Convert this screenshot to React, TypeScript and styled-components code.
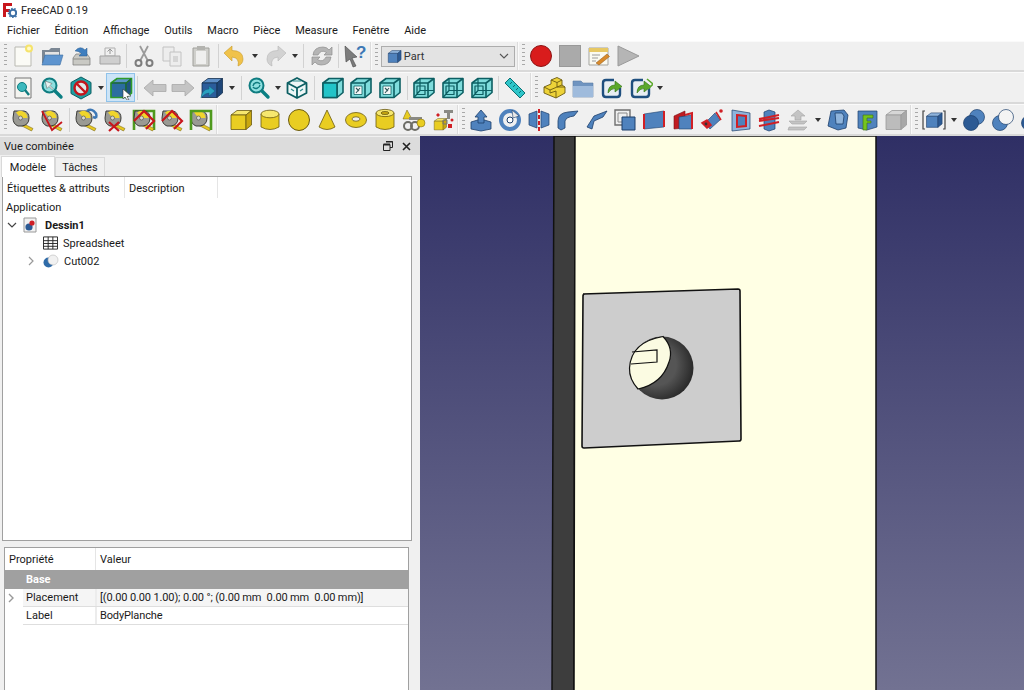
import React from 'react';
import styled, { createGlobalStyle } from 'styled-components';

const GlobalStyle = createGlobalStyle`
  html, body { margin: 0; padding: 0; background: #fff; }
  body { font-family: Roboto, "Open Sans", "Liberation Sans", sans-serif; color: #1a1a1a; }
`;

const cube = (t: string, l: string, r: string, s = '#23405f') => (
  <g stroke={s} strokeWidth=".8" strokeLinejoin="round">
    <path d="M2 7 8 2.5H22.5L17 7Z" fill={t} />
    <path d="M2 7H17V21.5H2Z" fill={l} />
    <path d="M17 7 22.5 2.5V17L17 21.5Z" fill={r} />
  </g>
);
const Y = ['#f6e76e', '#e9cd22', '#c9a80f', '#6b5a10'] as const;
const B = ['#8fb4dc', '#4f82bd', '#2c5a94', '#1d3f6b'] as const;
const yellowCube = cube(Y[0], Y[1], Y[2], Y[3]);
const blueCube = cube(B[0], B[1], B[2], B[3]);

const wire = (face?: string, mark?: boolean) => (
  <g stroke="#0d5f63" strokeWidth="1.6" strokeLinejoin="round" fill="none">
    <path d="M2 7 8 2.5H22V16.5L16 21.5H2Z" fill="#7fdcdc" />
    <path d="M2 7H16V21.5M16 7 22 2.5" />
    {face === 'front' && <path d="M2 7H16V21.5H2Z" fill="#22c4c8" />}
    {face === 'hollow' && <path d="M5 10H13V18.5H5Z" fill="#f4f8f8" strokeWidth=".8" />}
    {face === 'back' && <path d="M5 10H13V18.5H5ZM8 2.5V14.5H22M8 14.5 2 21.5" strokeWidth="1.2" />}
    {mark && <path d="M7 12 10 15M11 12 7 17" strokeWidth="1.1" stroke="#34585a" />}
  </g>
);

const isoCube = (
  <g stroke="#0d5f63" strokeWidth="1.8" strokeLinejoin="round" fill="#eef7f7">
    <path d="M12 2 21.5 7V17L12 22 2.5 17V7Z" />
    <path d="M2.5 7 12 12 21.5 7M12 12V22" fill="none" />
    <path d="M8 5H16M6 13 9 15M15 15 18 13" stroke="#2a8a8c" strokeWidth="1.2" fill="none" />
  </g>
);

const lens = (inner: React.ReactNode) => (
  <g>
    <path d="M14 14 21 21" stroke="#0b7f83" strokeWidth="3.4" strokeLinecap="round" />
    <circle cx="9.5" cy="9.5" r="7" fill="#8fe0e0" stroke="#0f7c80" strokeWidth="2" />
    {inner}
  </g>
);

const tape = (extra?: React.ReactNode) => (
  <g>
    <path d="M11 15 22 20.5 20.5 23 10 17.5Z" fill="#e8c821" stroke="#6b5a10" strokeWidth=".5" />
    <path d="M3 3H13Q18 4 18 10 18 17 11 18H7Q2 16 2 10Z" fill="#9a9a94" stroke="#3b3b38" strokeWidth="1" />
    <path d="M9.5 10H16.5A7 7 0 0 0 5 4.6Z" fill="#f0d52c" />
    <circle cx="9.5" cy="10" r="2" fill="#d9d9d2" stroke="#444" strokeWidth=".6" />
    {extra}
  </g>
);
const redAngle = <path d="M2 13 12 3 22 13 14 21" fill="none" stroke="#c8161c" strokeWidth="2.2" />;
const greenFrame = <path d="M2 22V3H22V22" fill="none" stroke="#4f9a1e" strokeWidth="2.6" />;

const arrowFlat = (fill: string, stroke: string, flip?: boolean) => (
  <path
    d="M1 12 10 4V8.5H23V15.5H10V20Z"
    fill={fill}
    stroke={stroke}
    strokeWidth=".8"
    transform={flip ? 'matrix(-1 0 0 1 24 0)' : undefined}
  />
);

const linkIcon = (double?: boolean) => (
  <g>
    <path d="M14 4H6Q3 4 3 7V18Q3 21 6 21H17Q20 21 20 18V12" fill="#e9eef3" stroke="#1f4f7f" strokeWidth="2.4" />
    <path d="M8 17Q8 9 15 9V5L22 10.5 15 16V12.5Q11 12.5 8 17Z" fill="#5ba82a" stroke="#2f6d16" strokeWidth=".6" />
    {double && <path d="M18 3 24 8 19 13" stroke="#5ba82a" strokeWidth="1.6" fill="none" />}
  </g>
);

const icons: Record<string, React.ReactNode> = {
  new: (
    <g>
      <path d="M4 3H20V22H4Z" fill="#fbfbf6" stroke="#b9b9b2" />
      <circle cx="18" cy="4.5" r="4" fill="#f5e36b" />
      <circle cx="18" cy="4.5" r="2" fill="#fff9c9" />
    </g>
  ),
  open: (
    <g>
      <path d="M2 6H9L11 4H20V19H2Z" fill="#7b8794" />
      <path d="M5 8H19V14H5Z" fill="#e4e4e4" />
      <path d="M5 11H23L20 21H2Z" fill="#5d94cf" stroke="#3e6ea3" strokeWidth=".6" />
    </g>
  ),
  save: (
    <g>
      <path d="M4 14 7 10H18L21 14V21H4Z" fill="#c9c9c4" stroke="#777" strokeWidth=".7" />
      <path d="M4 15H21" stroke="#8d8d88" />
      <path d="M6 7Q11 1 16 6L18 4V12H10L12.5 9.5Q9 6.5 6 7Z" fill="#3f7fbf" stroke="#285a8f" strokeWidth=".5" />
    </g>
  ),
  print: (
    <g opacity=".75">
      <path d="M7 4H17V12H7Z" fill="#f1f1f1" stroke="#9a9a9a" />
      <path d="M12 5V10M9.5 7.5 12 5 14.5 7.5" stroke="#777" fill="none" />
      <path d="M2 12H22V20H2Z" fill="#c4c4c4" stroke="#8a8a8a" />
    </g>
  ),
  cut: (
    <g fill="none" stroke="#9a9a9a">
      <path d="M8 2 16 17M16 2 8 17" strokeWidth="1.8" />
      <circle cx="6.5" cy="19" r="3" strokeWidth="2" stroke="#7d7d7d" />
      <circle cx="17.5" cy="19" r="3" strokeWidth="2" stroke="#7d7d7d" />
    </g>
  ),
  copy: (
    <g fill="#ededed" stroke="#c2c2c2">
      <path d="M3 3H14V17H3Z" />
      <path d="M10 8H21V22H10Z" />
      <path d="M13 12H18V18H13Z" fill="#d5d5d5" stroke="none" />
    </g>
  ),
  paste: (
    <g>
      <path d="M4 4H20V22H4Z" fill="#cfcfcb" stroke="#a0a09b" />
      <path d="M7 7H17V20H7Z" fill="#efefee" />
      <path d="M8 2H16V6H8Z" fill="#b3b3af" />
    </g>
  ),
  undo: (
    <path d="M1 9 9 2V6.5Q20 6.5 20 15 20 20 15 22 17 14 9 13V17Z" fill="#f0c24a" stroke="#c89a28" strokeWidth=".6" />
  ),
  redo: (
    <path d="M23 9 15 2V6.5Q4 6.5 4 15 4 20 9 22 7 14 15 13V17Z" fill="#d2d2d2" stroke="#b5b5b5" strokeWidth=".6" />
  ),
  refresh: (
    <g fill="#b5b5b5" stroke="#8e8e8e" strokeWidth=".7">
      <path d="M3 11Q4 3 13 3 17 3 19 6L22 3V11H14L16.5 8.5Q11 5 8 11Z" />
      <path d="M21 13Q20 21 11 21 7 21 5 18L2 21V13H10L7.5 15.5Q13 19 16 13Z" />
    </g>
  ),
  whats: (
    <g>
      <path d="M2 2 14 13 9 14 13 22 10 23 7 15 3 18Z" fill="#7c7c7c" stroke="#444" strokeWidth=".6" />
      <text x="13" y="14" fontSize="17" fontWeight="700" fill="#3d78b5" fontFamily="Liberation Sans, sans-serif">?</text>
    </g>
  ),
  record: <circle cx="12" cy="12" r="10.5" fill="#d91c1c" stroke="#8e1414" />,
  stop: <rect x="1.5" y="1.5" width="21" height="21" fill="#aaa" stroke="#999" />,
  macro: (
    <g>
      <path d="M2 4H21V21H2Z" fill="#fafaf2" stroke="#a5a5a0" />
      <path d="M2 4H21V8H2Z" fill="#e7c864" />
      <path d="M5 11H13M5 14H11M5 17H9" stroke="#9a9a9a" />
      <path d="M9 19 20 10 22.5 12.5 12 21Z" fill="#d98a2b" stroke="#8a561b" strokeWidth=".5" />
    </g>
  ),
  play: <path d="M2 2 23 12 2 22Z" fill="#b5b5b5" stroke="#9a9a9a" />,
  fitAll: (
    <g>
      <path d="M4 2H20V22H4Z" fill="#f4f4f0" stroke="#777" />
      <circle cx="11" cy="11" r="4.5" fill="#3cb9bd" stroke="#0f7c80" />
      <path d="M14 14 18 19" stroke="#0f7c80" strokeWidth="2.4" />
    </g>
  ),
  fitSel: lens(<path d="M5 5 12 7.5 10 9.5 13 12.5 12 13.5 9 10.5 7 12.5Z" fill="#e8f2f2" stroke="#555" strokeWidth=".5" />),
  draw: (
    <g>
      <path d="M12 1 22 6.5V17.5L12 23 2 17.5V6.5Z" fill="#1f9ea2" stroke="#0d5f63" />
      <circle cx="12" cy="12" r="6.5" fill="#dfe9e9" stroke="#c4161c" strokeWidth="2.4" />
      <path d="M7.5 7.5 16.5 16.5" stroke="#c4161c" strokeWidth="2.4" />
    </g>
  ),
  bbox: (
    <g>
      {cube('#5a97c9', '#2b6da0', '#1f5580', '#143f63')}
      <path d="M2 7 8 2.5H22.5V17L17 21.5H2Z" fill="none" stroke="#2f9a2a" strokeWidth="1.6" />
      <path d="M2 7H17V21.5M17 7 22.5 2.5" fill="none" stroke="#1f7a1f" strokeWidth="1.1" />
      <path d="M14 13 22 20 18 20.5 20 24 18 24 16 21 14 23Z" fill="#fff" stroke="#333" strokeWidth=".6" />
    </g>
  ),
  back: arrowFlat('#c4c4c4', '#a8a8a8'),
  forward: arrowFlat('#c4c4c4', '#a8a8a8', true),
  viewMenu: (
    <g>
      {cube('#5d8fc7', '#2b5d9b', '#1e4678', '#14304f')}
      <path d="M1 22Q2 13 9 13V10L15 15 9 20V17Q5 17 1 22Z" fill="#2aa0c0" stroke="#14607a" strokeWidth=".5" />
    </g>
  ),
  zoomSync: lens(<path d="M6 10A4 4 0 0 1 13 8M13 9A4 4 0 0 1 6 11" stroke="#0f7c80" strokeWidth="1.4" fill="none" />),
  iso: isoCube,
  front: wire('front'),
  top: wire('hollow', true),
  right: wire('hollow', true),
  backV: wire('back'),
  bottom: wire('back'),
  left: wire('back'),
  ruler: (
    <g>
      <path d="M2 7 7 2 22 17 17 22Z" fill="#2ec5c9" stroke="#0d6f73" />
      <path d="M7 8 9 6M10 11 12 9M13 14 15 12M16 17 18 15" stroke="#0d6f73" />
    </g>
  ),
  part: (
    <g fill="#edd238" stroke="#6b5a10" strokeWidth=".9" strokeLinejoin="round">
      <path d="M2 11 9 8V4L15 1.5 20 4V9L23 11V17L14 22 2 17Z" />
      <path d="M2 11 8 14V17L14 15V22M9 4 15 6.5 20 4M15 6.5V11L20 9M8 14 15 11 23 11" fill="none" />
    </g>
  ),
  folder: (
    <g>
      <path d="M2 5H10L12 7H22V21H2Z" fill="#6f94c0" stroke="#5c7da6" strokeWidth=".6" />
      <path d="M2 10H22V21H2Z" fill="#9fbbdc" />
    </g>
  ),
  link: linkIcon(),
  linkDouble: linkIcon(true),
  tape: tape(),
  tapeAngle: tape(<path d="M2 3 12 22 22 14" fill="none" stroke="#c8161c" strokeWidth="1.8" />),
  tapeRefresh: tape(<path d="M13 3A6 6 0 0 1 22 10M22 10 19 9" fill="none" stroke="#3d78b5" strokeWidth="2.4" />),
  tapeX: tape(<path d="M6 14 16 23M16 14 6 23" stroke="#c8161c" strokeWidth="2.2" />),
  tapeGreenRed: (
    <g>
      {greenFrame}
      {tape()}
      {redAngle}
    </g>
  ),
  tapeRed: tape(redAngle),
  tapeGreen: (
    <g>
      {tape()}
      {greenFrame}
    </g>
  ),
  box: yellowCube,
  cylinder: (
    <g stroke={Y[3]} strokeWidth=".8">
      <path d="M3 6V19Q12 24 21 19V6Z" fill={Y[1]} />
      <ellipse cx="12" cy="6" rx="9" ry="3.8" fill={Y[0]} />
    </g>
  ),
  sphere: <circle cx="12" cy="12" r="10.5" fill={Y[1]} stroke={Y[3]} />,
  cone: (
    <path d="M12 2 20 19Q12 24 4 19Z" fill={Y[1]} stroke={Y[3]} strokeWidth=".8" />
  ),
  torus: (
    <g stroke={Y[3]} strokeWidth=".8">
      <ellipse cx="12" cy="12" rx="10.5" ry="7.5" fill={Y[1]} />
      <ellipse cx="12" cy="11" rx="4" ry="2.2" fill="#efefef" />
    </g>
  ),
  tube: (
    <g stroke={Y[3]} strokeWidth=".8">
      <path d="M3 5V19Q12 24 21 19V5Z" fill={Y[1]} />
      <ellipse cx="12" cy="5" rx="9" ry="3.6" fill={Y[0]} />
      <ellipse cx="12" cy="5" rx="4" ry="1.5" fill={Y[2]} />
    </g>
  ),
  builder: (
    <g>
      <path d="M5 2 10 11H1Z" fill={Y[1]} stroke={Y[3]} strokeWidth=".5" />
      <path d="M7 9H20V12H7Z" fill="#8a8a84" />
      <circle cx="6" cy="18" r="4" fill="none" stroke="#6d6d66" strokeWidth="2" />
      <circle cx="13" cy="18" r="4" fill="none" stroke="#6d6d66" strokeWidth="2" />
      <circle cx="19" cy="15" r="4" fill={Y[1]} stroke={Y[3]} strokeWidth=".5" />
    </g>
  ),
  primitives: (
    <g>
      <g transform="translate(2 9) scale(.6)">{yellowCube}</g>
      <path d="M13 2H22V5H13Z M16 5H19V11H16Z" fill="#8a8a84" />
      <path d="M5 7 7 5 9 7 7 9ZM17 16H21V20H17Z" fill="#d01f25" />
      <path d="M12 12H16V16H12Z" fill="none" stroke="#777" />
      <circle cx="21" cy="12" r="1.5" fill="#d01f25" />
    </g>
  ),
  extrude: (
    <g stroke={B[3]} strokeWidth=".8">
      <path d="M2 14 12 11 22 14V21L12 23 2 21Z" fill={B[1]} />
      <path d="M12 2 18 9H15V15H9V9H6Z" fill={B[1]} />
    </g>
  ),
  revolve: (
    <g>
      <circle cx="12" cy="12" r="9" fill="none" stroke={B[1]} strokeWidth="4" />
      <circle cx="12" cy="12" r="3" fill="#fff" stroke={B[3]} />
      <path d="M14 2 21 8 15 10Z" fill="#e9e9e9" stroke={B[3]} strokeWidth=".6" />
    </g>
  ),
  mirror: (
    <g>
      <path d="M2 6 10 3V20L2 17ZM22 6 14 3V20L22 17Z" fill={B[1]} stroke={B[3]} strokeWidth=".7" />
      <path d="M12 1V23" stroke="#d01f25" strokeWidth="2" strokeDasharray="4 2" />
    </g>
  ),
  fillet: (
    <path d="M2 20V13Q2 5 12 4L22 3 18 8Q10 9 9 13V20L5 22Z" fill={B[1]} stroke={B[3]} strokeWidth=".8" />
  ),
  chamfer: (
    <path d="M2 19 9 8 22 3 18 9 9 13 7 21Z" fill={B[1]} stroke={B[3]} strokeWidth=".8" />
  ),
  offset: (
    <g>
      <path d="M2 2H17V17H2Z" fill="#efefef" stroke="#6f6f6f" strokeWidth="1.4" />
      <path d="M5 5H14V14H5Z" fill="#efefef" stroke="#8a8a8a" />
      <path d="M9 9H22V22H9Z" fill={B[1]} stroke={B[3]} />
    </g>
  ),
  ruled: (
    <g>
      <path d="M2 6 22 3V19L2 21Z" fill={B[1]} stroke={B[3]} strokeWidth=".6" />
      <path d="M2 6V21M22 3V19" stroke="#d01f25" strokeWidth="2" />
    </g>
  ),
  loft: (
    <g>
      <path d="M3 8 14 3V20L3 21Z" fill="#c01c22" stroke="#7a1015" strokeWidth=".6" />
      <path d="M8 9 21 7V21H8Z" fill={B[1]} stroke={B[3]} strokeWidth=".6" />
      <path d="M14 7 21 5V21" fill="none" stroke="#d01f25" strokeWidth="2" />
    </g>
  ),
  sweep: (
    <g>
      <path d="M5 15 15 5 20 12 10 21Z" fill={B[1]} stroke={B[3]} strokeWidth=".6" />
      <path d="M2 15 7 20 11 17 7 12ZM16 4 21 12" fill="#d01f25" stroke="#d01f25" strokeWidth="1.6" />
      <circle cx="21" cy="3" r="1.8" fill="#d01f25" />
      <circle cx="6" cy="16" r="1.4" fill="#333" />
    </g>
  ),
  thick: (
    <g>
      <path d="M3 2 21 5V21L3 23Z" fill={B[0]} stroke={B[3]} strokeWidth=".7" />
      <path d="M8 7 17 8V18L8 19Z" fill={B[1]} stroke="#d01f25" strokeWidth="2" />
    </g>
  ),
  section: (
    <g>
      <path d="M7 4 12 2 18 4V21L12 23 7 21Z" fill={B[1]} stroke={B[3]} strokeWidth=".7" />
      <path d="M2 11 22 7M2 18 22 14M2 13 22 10" stroke="#d01f25" strokeWidth="2" />
    </g>
  ),
  stackUp: (
    <g fill="#c4c4c4" stroke="#a5a5a5" strokeWidth=".6">
      <path d="M12 2 19 8H15V12H9V8H5Z" />
      <path d="M3 13H21L18 16H6Z" />
      <path d="M3 19H21L18 22H2Z" />
    </g>
  ),
  shell: (
    <g stroke={B[3]} strokeWidth=".8">
      <path d="M5 3 18 2 22 7 20 20 12 22 2 18Z" fill={B[1]} />
      <path d="M9 5H16L18 8 17 16 10 16Z" fill={B[0]} />
    </g>
  ),
  feature: (
    <g>
      <path d="M3 3H22V19L12 22 3 20Z" fill={B[1]} stroke={B[3]} strokeWidth=".7" />
      <path d="M8 7H18V10H12V13H16V15H12V22H8Z" fill="#75c41f" stroke="#3a6f10" strokeWidth=".6" />
    </g>
  ),
  grayCube: cube('#d6d6d6', '#bcbcbc', '#a8a8a8', '#999'),
  compound: (
    <g>
      <g transform="translate(3 3) scale(.76)">{blueCube}</g>
      <path d="M3 3H1V21H3M21 3H23V21H21" fill="none" stroke="#444" strokeWidth="1.2" />
    </g>
  ),
  bool: (
    <g stroke={B[3]} strokeWidth=".7">
      <circle cx="15" cy="9" r="7.5" fill={B[1]} />
      <circle cx="9" cy="15" r="7.5" fill={B[2]} />
    </g>
  ),
  cut2: (
    <g stroke={B[3]} strokeWidth=".7">
      <circle cx="9" cy="15" r="7.5" fill={B[1]} />
      <circle cx="15" cy="9" r="7.5" fill="#f4f4f4" />
    </g>
  ),
};

// '|' separator, '=' wide separator, 'v' drop arrow, 'w' narrow drop arrow, '*' pressed button
const row1 = ['new', 'open', 'save', 'print', '|', 'cut', 'copy', 'paste', '|', 'undo', 'v', 'redo', 'v', '=', 'refresh', '|', 'whats'];
const macroRow = ['record', 'stop', 'macro', 'play'];
const row2 = ['fitAll', 'fitSel', 'draw', 'v', '*bbox', '|', 'back', 'forward', 'viewMenu', 'v', '=', 'zoomSync', 'w', 'iso', '=', 'front', 'top', 'right', '|', 'backV', 'bottom', 'left', '|', 'ruler'];
const row2b = ['part', 'folder', 'link', 'linkDouble', 'v'];
const row3 = ['tape', 'tapeAngle', '|', 'tapeRefresh', 'tapeX', 'tapeGreenRed', 'tapeRed', 'tapeGreen'];
const row3b = ['box', 'cylinder', 'sphere', 'cone', 'torus', 'tube', 'builder', 'primitives'];
const row3c = ['extrude', 'revolve', 'mirror', 'fillet', 'chamfer', 'offset', 'ruled', 'loft', 'sweep', 'thick', 'section', 'stackUp', 'v', 'shell', 'feature', 'grayCube'];
const row3d = ['compound', 'v', 'bool', 'cut2', 'bool'];

const Page = styled.div`
  width: 1024px;
  height: 690px;
  overflow: hidden;
  display: flex;
  flex-direction: column;
  background: #f0f0f0;
  font-size: 11px;
`;

const TitleBar = styled.div`
  height: 20px;
  display: flex;
  align-items: center;
  gap: 4px;
  padding-left: 3px;
  background: #fff;
  font-size: 11px;
  color: #222;
`;

const MenuBar = styled.nav`
  height: 21px;
  display: flex;
  align-items: center;
  gap: 14.8px;
  padding-left: 7px;
  background: #fff;
  font-size: 11px;
`;

const ToolRow = styled.div<{ $h: number }>`
  height: ${p => p.$h}px;
  flex: none;
  display: flex;
  align-items: center;
  padding-left: 1px;
  background: #f0f0f0;
  border-top: 1px solid #fafafa;
  border-bottom: 2px solid #d9d9d9;
  box-sizing: border-box;
  overflow: hidden;
`;

const Grip = styled.span`
  flex: none;
  width: 3px;
  height: 24px;
  margin: 0 2px 0 3px;
  background: repeating-linear-gradient(to bottom, #a8a8a8 0 1px, transparent 1px 4px);
`;

const GripGap = styled.span`
  flex: none;
  width: 9px;
`;

const ToolDivider = styled.span`
  flex: none;
  width: 2px;
  align-self: stretch;
  box-sizing: border-box;
  background: #dcdcdc;
  border-right: 1px solid #fafafa;
`;

const Btn = styled.span<{ $active?: boolean }>`
  flex: none;
  width: 28.8px;
  height: 29px;
  box-sizing: border-box;
  display: flex;
  align-items: center;
  justify-content: center;
  background: ${p => (p.$active ? '#cce4f7' : 'transparent')};
  border: 1px solid ${p => (p.$active ? '#8fc2ea' : 'transparent')};
`;

const Drop = styled.span<{ $narrow?: boolean }>`
  flex: none;
  width: ${p => (p.$narrow ? 9 : 11)}px;
  display: flex;
  justify-content: center;
  &::after {
    content: '';
    border-left: 3.5px solid transparent;
    border-right: 3.5px solid transparent;
    border-top: 4px solid #333;
  }
`;

const Sep = styled.span<{ $wide?: boolean }>`
  flex: none;
  width: 1px;
  height: 24px;
  margin: 0 ${p => (p.$wide ? 3 : 2)}px;
  background: #d2d2d2;
`;

const Combo = styled.div`
  flex: none;
  width: 134px;
  height: 21px;
  box-sizing: border-box;
  margin: 0 2px 0 1px;
  padding: 0 5px;
  display: flex;
  align-items: center;
  gap: 2px;
  background: #e3e3e3;
  border: 1px solid #adadad;
  font-size: 11px;
  color: #333;
`;

const ComboLabel = styled.span`
  flex: 1;
`;

const Body = styled.main`
  flex: 1;
  min-height: 0;
  display: flex;
`;

const Sidebar = styled.aside`
  width: 420px;
  flex: none;
  display: flex;
  flex-direction: column;
  background: #f0f0f0;
`;

const DockTitle = styled.div`
  height: 18px;
  padding: 0 9px 0 4px;
  margin-top: 1px;
  display: flex;
  align-items: center;
  justify-content: space-between;
  background: #dcdcdc;
  font-size: 11px;
`;

const DockButtons = styled.div`
  display: flex;
  gap: 9px;
  align-items: center;
`;

const Tabs = styled.div`
  height: 21px;
  flex: none;
  padding-left: 1px;
  display: flex;
  align-items: flex-end;
`;

const Tab = styled.div<{ $on?: boolean }>`
  height: ${p => (p.$on ? 21 : 19)}px;
  width: ${p => (p.$on ? 54 : 50)}px;
  box-sizing: border-box;
  display: flex;
  align-items: center;
  justify-content: center;
  background: ${p => (p.$on ? '#fff' : '#f0f0f0')};
  border: 1px solid #d9d9d9;
  border-bottom: none;
  margin-bottom: ${p => (p.$on ? -1 : 0)}px;
  position: relative;
`;

const TreeBox = styled.section`
  height: 363px;
  flex: none;
  margin: 0 8px 0 2px;
  background: #fff;
  border: 1px solid #a0a0a0;
`;

const HeaderRow = styled.div`
  display: flex;
  height: 21px;
`;

const HeaderCell = styled.div<{ $w?: number }>`
  width: ${p => (p.$w ? `${p.$w}px` : 'auto')};
  flex: ${p => (p.$w ? 'none' : '1')};
  box-sizing: border-box;
  padding: 1px 0 0 4px;
  display: flex;
  align-items: center;
  border-right: ${p => (p.$w ? '1px solid #e5e5e5' : 'none')};
`;

const TreeRow = styled.div<{ $indent: number; $bold?: boolean }>`
  height: 18px;
  display: flex;
  align-items: center;
  gap: 5px;
  padding-left: ${p => p.$indent}px;
  font-weight: ${p => (p.$bold ? 700 : 400)};
`;

const DocName = styled.span`
  margin-left: 2px;
`;

const Chevron = styled.svg`
  flex: none;
  width: 10px;
  height: 10px;
`;

const CutIcon = styled.svg`
  flex: none;
  width: 16px;
  height: 14px;
  margin-left: 2px;
`;

const PropBox = styled.section`
  flex: 1;
  margin: 6px 11px 0 4px;
  background: #fff;
  border: 1px solid #a0a0a0;
  border-bottom: none;
`;

const PropHeader = styled.div`
  display: flex;
  height: 22px;
`;

const GroupRow = styled.div`
  height: 19px;
  padding-left: 21px;
  display: flex;
  align-items: center;
  background: #a0a0a0;
  color: #fff;
  font-weight: 700;
`;

const PropRow = styled.div<{ $alt?: boolean }>`
  height: 18px;
  box-sizing: border-box;
  display: flex;
  align-items: center;
  margin-left: 18px;
  background: ${p => (p.$alt ? '#f5f5f5' : '#fff')};
  border-bottom: 1px solid #dedede;
  position: relative;
`;

const PropName = styled.div`
  width: 74px;
  flex: none;
  box-sizing: border-box;
  padding-left: 3px;
  align-self: stretch;
  display: flex;
  align-items: center;
  border-right: 2px solid #ececec;
`;

const PropValue = styled.div`
  padding-left: 3px;
  white-space: pre;
  letter-spacing: -0.13px;
`;

const RowChevron = styled(Chevron)`
  position: absolute;
  left: -17px;
  top: 4px;
`;

const Viewport = styled.div`
  flex: 1;
  background: linear-gradient(to bottom, #2f2f65, #727292);
`;

const Scene = styled.svg`
  display: block;
  width: 604px;
  height: 555px;
`;

const Glyph = ({ name, size = 24 }: { name: string; size?: number }) => (
  <svg width={size} height={size} viewBox="0 0 24 24">
    {icons[name]}
  </svg>
);

const Tools = ({ items }: { items: string[] }) => (
  <>
    {items.map((it, i) => {
      if (it === '|') return <Sep key={i} />;
      if (it === '=') return <Sep key={i} $wide />;
      if (it === 'v') return <Drop key={i} />;
      if (it === 'w') return <Drop key={i} $narrow />;
      const active = it.startsWith('*');
      return (
        <Btn key={i} $active={active}>
          <Glyph name={active ? it.slice(1) : it} />
        </Btn>
      );
    })}
  </>
);

const ChevronDown = () => (
  <Chevron viewBox="0 0 10 10">
    <path d="M1 3 5 7 9 3" fill="none" stroke="#444" strokeWidth="1.2" />
  </Chevron>
);
const ChevronRight = () => (
  <Chevron viewBox="0 0 10 10">
    <path d="M3 1 7 5 3 9" fill="none" stroke="#999" strokeWidth="1.2" />
  </Chevron>
);

const menus = ['Fichier', 'Édition', 'Affichage', 'Outils', 'Macro', 'Pièce', 'Measure', 'Fenêtre', 'Aide'];

const App = () => (
  <Page>
    <GlobalStyle />
    <TitleBar>
      <svg width="14" height="16" viewBox="0 0 14 16">
        <path d="M0 1H9V4H3V7H7V10H3V15H0Z" fill="#c8161c" />
        <circle cx="10" cy="11" r="3.2" fill="none" stroke="#3d6fa5" strokeWidth="2" />
        <circle cx="10" cy="11" r="4.6" fill="none" stroke="#3d6fa5" strokeWidth="1.2" strokeDasharray="1.6 1.6" />
      </svg>
      FreeCAD 0.19
    </TitleBar>
    <MenuBar>
      {menus.map(m => (
        <span key={m}>{m}</span>
      ))}
    </MenuBar>
    <ToolRow $h={31}>
      <Grip />
      <Tools items={row1} />
      <ToolDivider />
      <Grip />
      <Combo>
        <svg width="15" height="15" viewBox="0 0 24 24">{blueCube}</svg>
        <ComboLabel>Part</ComboLabel>
        <svg width="10" height="10" viewBox="0 0 10 10">
          <path d="M1 3 5 7 9 3" fill="none" stroke="#555" strokeWidth="1.1" />
        </svg>
      </Combo>
      <ToolDivider />
      <Grip />
      <Tools items={macroRow} />
    </ToolRow>
    <ToolRow $h={32}>
      <Grip />
      <Tools items={row2} />
      <ToolDivider />
      <Grip />
      <Tools items={row2b} />
    </ToolRow>
    <ToolRow $h={32}>
      <Grip />
      <Tools items={row3} />
      <ToolDivider />
      <GripGap />
      <Tools items={row3b} />
      <ToolDivider />
      <Grip />
      <Tools items={row3c} />
      <ToolDivider />
      <Grip />
      <Tools items={row3d} />
    </ToolRow>
    <Body>
      <Sidebar>
        <DockTitle>
          Vue combinée
          <DockButtons>
            <svg width="10" height="10" viewBox="0 0 10 10">
              <path d="M3 .5H9.5V6.5H7M.5 3.5H7V9.5H.5Z" fill="none" stroke="#222" />
              <path d="M.5 3.5H7M3 .5H9.5" stroke="#222" strokeWidth="2" />
            </svg>
            <svg width="9" height="9" viewBox="0 0 9 9">
              <path d="M1 1 8 8M8 1 1 8" stroke="#222" strokeWidth="1.6" />
            </svg>
          </DockButtons>
        </DockTitle>
        <Tabs>
          <Tab $on>Modèle</Tab>
          <Tab>Tâches</Tab>
        </Tabs>
        <TreeBox>
          <HeaderRow>
            <HeaderCell $w={122}>Étiquettes &amp; attributs</HeaderCell>
            <HeaderCell $w={93}>Description</HeaderCell>
            <HeaderCell />
          </HeaderRow>
          <TreeRow $indent={3}>Application</TreeRow>
          <TreeRow $indent={4} $bold>
            <ChevronDown />
            <svg width="16" height="16" viewBox="0 0 16 16">
              <path d="M2 1H14V15H2Z" fill="#f2f2f2" stroke="#999" />
              <circle cx="7" cy="10" r="3.6" fill="#2c5a94" />
              <circle cx="10" cy="6" r="2.6" fill="#d01f25" />
            </svg>
            <DocName>Dessin1</DocName>
          </TreeRow>
          <TreeRow $indent={40}>
            <svg width="15" height="14" viewBox="0 0 16 14">
              <path d="M.5 .5H15.5V13.5H.5ZM.5 4.5H15.5M.5 7.5H15.5M.5 10.5H15.5M5.5 .5V13.5M10.5 .5V13.5" fill="none" stroke="#222" />
            </svg>
            Spreadsheet
          </TreeRow>
          <TreeRow $indent={23}>
            <ChevronRight />
            <CutIcon viewBox="0 0 16 14">
              <circle cx="5.5" cy="8.5" r="5" fill="#2f6ba8" />
              <circle cx="10" cy="6" r="5" fill="#f1f1f1" stroke="#bbb" strokeWidth=".6" />
            </CutIcon>
            Cut002
          </TreeRow>
        </TreeBox>
        <PropBox>
          <PropHeader>
            <HeaderCell $w={91}>Propriété</HeaderCell>
            <HeaderCell>Valeur</HeaderCell>
          </PropHeader>
          <GroupRow>Base</GroupRow>
          <PropRow $alt>
            <RowChevron viewBox="0 0 10 10">
              <path d="M3 1 7 5 3 9" fill="none" stroke="#999" strokeWidth="1.4" />
            </RowChevron>
            <PropName>Placement</PropName>
            <PropValue>[(0.00 0.00 1.00); 0.00 °; (0.00 mm  0.00 mm  0.00 mm)]</PropValue>
          </PropRow>
          <PropRow>
            <PropName>Label</PropName>
            <PropValue>BodyPlanche</PropValue>
          </PropRow>
        </PropBox>
      </Sidebar>
      <Viewport>
        <Scene viewBox="0 0 604 555">
          <defs>
            <radialGradient id="hole" cx="0.4" cy="0.45" r="0.65">
              <stop offset="0.5" stopColor="#555" />
              <stop offset="1" stopColor="#222" />
            </radialGradient>
          </defs>
          <path d="M134 0H155L154 555H132Z" fill="#3d3d3d" stroke="#111" strokeWidth="1.5" />
          <path d="M155 0H456L456 555H154Z" fill="#ffffe4" stroke="#111" strokeWidth="1.5" />
          <path
            d="M163 158 318 153Q320 153 320 155L321 303Q321 305 319 305L164 312Q162 312 162 310L163 160Q163 158 165 158Z"
            fill="#cdcdcd"
            stroke="#111"
            strokeWidth="1.6"
          />
          <circle cx="242" cy="232" r="31.5" fill="url(#hole)" />
          <path
            d="M243 200.5Q254 212 249 226 242 248 218 253 209 243 209.5 232 211 206 243 200.5Z"
            fill="#fbfbe2"
            stroke="#111"
            strokeWidth="1.2"
          />
          <path d="M212 216 237 214V226L211 228" fill="none" stroke="#111" strokeWidth="1.2" />
        </Scene>
      </Viewport>
    </Body>
  </Page>
);

export default App;
